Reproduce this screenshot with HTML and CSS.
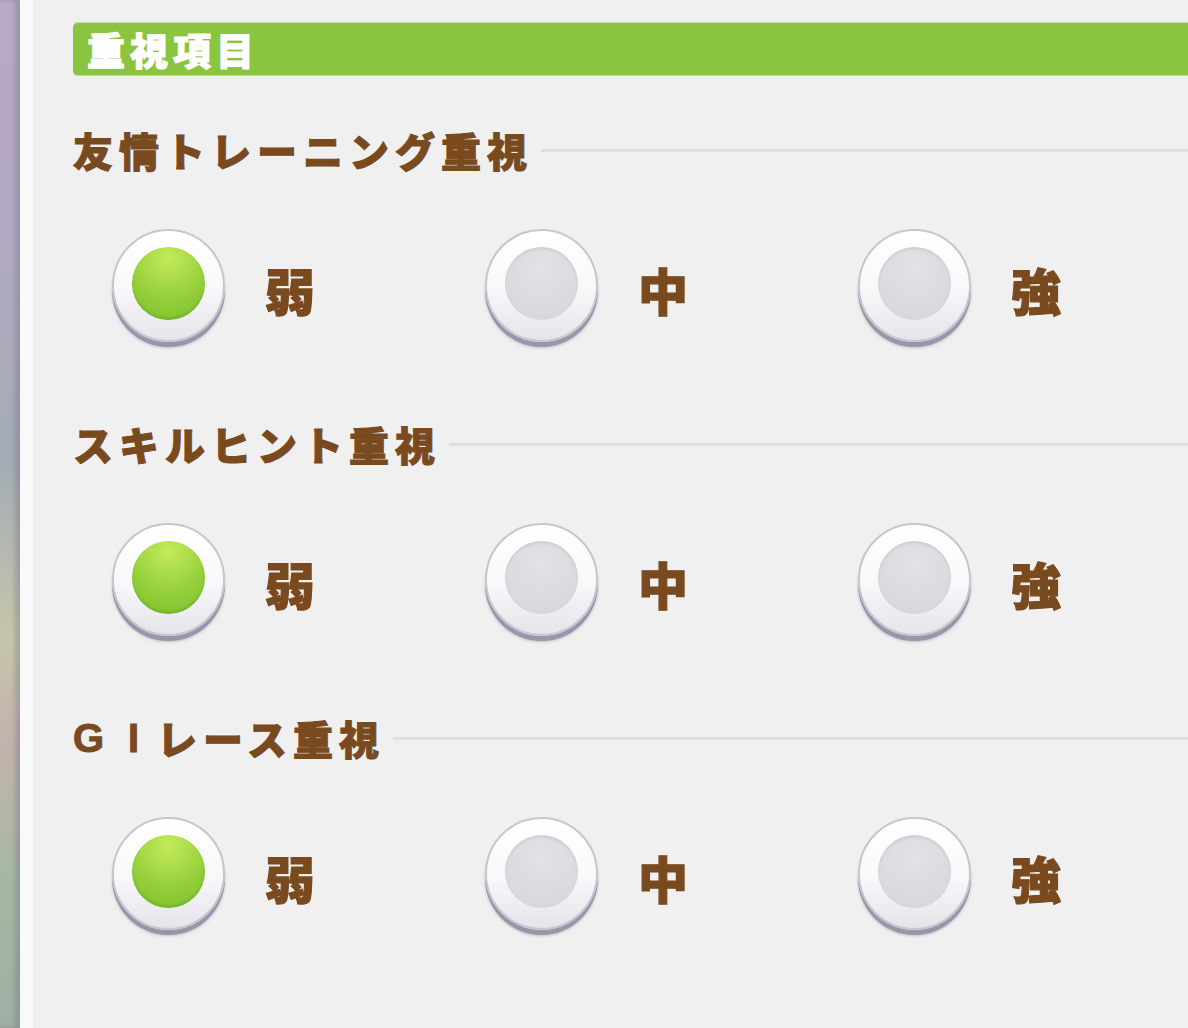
FILE: index.html
```html
<!DOCTYPE html>
<html lang="ja">
<head>
    <meta charset="UTF-8">
    <meta name="viewport" content="width=device-width, initial-scale=1.0">
    <title>重視項目</title>
    <link rel="stylesheet" href="styles.css">
</head>
<body>
    <div class="backdrop"></div>
    <div class="panel">
        <div class="panel-title">重視項目</div>

        <div class="section">
            <div class="sec-title">友情トレーニング重視</div>
            <div class="choices">
                <label class="choice"><span class="radio on"></span><span class="choice-text">弱</span></label>
                <label class="choice"><span class="radio"></span><span class="choice-text">中</span></label>
                <label class="choice"><span class="radio"></span><span class="choice-text">強</span></label>
            </div>
        </div>

        <div class="section">
            <div class="sec-title">スキルヒント重視</div>
            <div class="choices">
                <label class="choice"><span class="radio on"></span><span class="choice-text">弱</span></label>
                <label class="choice"><span class="radio"></span><span class="choice-text">中</span></label>
                <label class="choice"><span class="radio"></span><span class="choice-text">強</span></label>
            </div>
        </div>

        <div class="section">
            <div class="sec-title"><span class="latin g">G</span><span class="latin i">I</span>レース重視</div>
            <div class="choices">
                <label class="choice"><span class="radio on"></span><span class="choice-text">弱</span></label>
                <label class="choice"><span class="radio"></span><span class="choice-text">中</span></label>
                <label class="choice"><span class="radio"></span><span class="choice-text">強</span></label>
            </div>
        </div>
    </div>
</body>
</html>
```

FILE: styles.css
```css
html, body {
    height: 100%;
}
body {
    margin: 0;
    display: flex;
    overflow: hidden;
    background: #f0f0f0;
    font-family: "Noto Sans CJK JP", "Noto Sans", sans-serif;
    font-weight: 900;
}
.backdrop {
    width: 20px;
    flex-shrink: 0;
    background: linear-gradient(180deg, #b9a9c8 0%, #b3a9c2 22%, #a3acb4 45%, #c6c5ab 62%, #c3b3ad 72%, #a7b8a2 85%, #a0aea4 100%);
    box-shadow: inset -5px 0 4px rgba(110, 110, 125, 0.35);
}
.panel {
    flex: 1;
    border-left: 13px solid #f9f9f9;
    padding: 22px 0 0 40px;
    background: #f0f0f0;
}
.panel-title {
    height: 54px;
    line-height: 52px;
    padding-left: 14px;
    background: #8bc53f;
    border-top: 1px solid #c4e3a0;
    border-bottom: 1px solid #b5d98c;
    border-radius: 5px 0 0 5px;
    color: #fff;
    font-size: 38px;
    letter-spacing: 5px;
    -webkit-text-stroke: 1px #fff;
    box-sizing: border-box;
}
.section {
    margin-top: 49px;
}
.section + .section {
    margin-top: 77px;
}
.sec-title {
    display: flex;
    align-items: center;
    height: 50px;
    color: #7a4a1f;
    font-size: 40px;
    letter-spacing: 6px;
    -webkit-text-stroke: 1px #7a4a1f;
    white-space: nowrap;
}
.sec-title::after {
    content: "";
    flex: 1;
    height: 3px;
    margin-left: 8px;
    background: #e0e0e0;
}
.latin {
    display: inline-block;
    font-family: "Liberation Sans", sans-serif;
    font-weight: 700;
    letter-spacing: 0;
}
.latin.g {
    width: 55px;
}
.latin.i {
    width: 29px;
}
.choices {
    display: flex;
    margin-top: 54px;
    padding-left: 39px;
}
.choice {
    display: flex;
    align-items: center;
    gap: 40px;
    width: 373px;
}
.radio {
    position: relative;
    width: 113px;
    height: 113px;
    border-radius: 50%;
    box-sizing: border-box;
    border: 2px solid #c6c6ce;
    background: linear-gradient(180deg, #ffffff 0%, #f8f8fa 55%, #e4e4ea 100%);
    box-shadow: 0 5px 0 #9896ab, 0 6px 3px rgba(90, 88, 110, 0.3);
}
.radio::after {
    content: "";
    position: absolute;
    left: 18px;
    top: 16px;
    width: 73px;
    height: 73px;
    border-radius: 50%;
    background: radial-gradient(circle at 50% 30%, #e2e2e6 0%, #d9d9de 70%, #cfcfd5 100%);
    box-shadow: inset 0 2px 3px rgba(0, 0, 0, 0.08);
}
.radio.on::after {
    background: radial-gradient(circle at 50% 15%, #c4eb5a 0%, #96d03c 55%, #7dbf2c 100%);
    box-shadow: inset 0 -2px 3px rgba(60, 120, 20, 0.25);
}
.choice-text {
    color: #7a4a1f;
    font-size: 50px;
    -webkit-text-stroke: 1.2px #7a4a1f;
    line-height: 1;
    padding-top: 6px;
}
```
